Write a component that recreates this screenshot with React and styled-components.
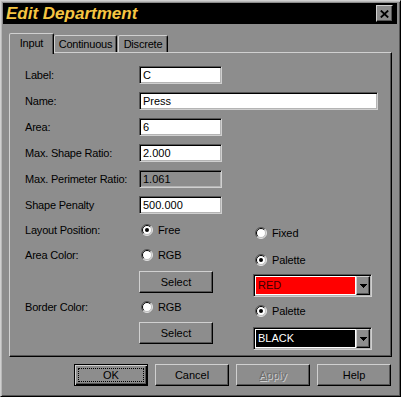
import React from "react";
import styled, { createGlobalStyle, css } from "styled-components";

const BG = "#8d8d8d";
const LIGHT = "#d0d0d0";
const SHADOW = "#555555";

const GlobalStyle = createGlobalStyle`
  html, body { margin: 0; padding: 0; background: ${BG}; }
  body {
    font-family: "Liberation Sans", Arial, sans-serif;
    font-size: 11px;
    color: #000;
  }
  #root { width: 401px; height: 397px; }
`;

const raised = css`
  border: 1px solid;
  border-color: ${LIGHT} #000 #000 ${LIGHT};
  box-shadow: inset -1px -1px 0 ${SHADOW};
`;

const sunken = css`
  border: 1px solid;
  border-color: ${SHADOW} ${LIGHT} ${LIGHT} ${SHADOW};
  box-shadow: inset 1px 1px 0 #000, inset -1px -1px 0 #b4b4b4;
`;

const Window = styled.div`
  box-sizing: border-box;
  width: 401px;
  height: 397px;
  background: ${BG};
  border: 1px solid;
  border-color: ${LIGHT} #000 #000 ${LIGHT};
  box-shadow: inset 1px 1px 0 #b8b8b8, inset -1px -1px 0 ${SHADOW};
  padding: 2px 3px 3px 2px;
  display: flex;
  flex-direction: column;
`;

const TitleBar = styled.div`
  height: 21px;
  flex: none;
  background: #000;
  display: flex;
  align-items: center;
  justify-content: space-between;
  padding: 0 4px 0 3px;
`;

const Title = styled.span`
  font-family: "Liberation Sans", Arial, sans-serif;
  font-weight: bold;
  font-style: italic;
  font-size: 17px;
  color: #f5c542;
  line-height: 21px;
`;

const CloseButton = styled.div`
  ${raised};
  box-sizing: border-box;
  width: 17px;
  height: 17px;
  background: ${BG};
  display: flex;
  align-items: center;
  justify-content: center;
`;

const Body = styled.div`
  padding: 9px 5px 0 6px;
  display: flex;
  flex-direction: column;
`;

const TabRow = styled.div`
  height: 19px;
  display: flex;
  align-items: flex-end;
`;

const Tab = styled.div`
  position: relative;
  box-sizing: border-box;
  width: ${(p) => p.$w}px;
  height: ${(p) => (p.$active ? 21 : 17)}px;
  margin-bottom: ${(p) => (p.$active ? -2 : 0)}px;
  margin-right: ${(p) => (p.$active ? 0 : 1)}px;
  z-index: ${(p) => (p.$active ? 2 : 0)};
  background: ${BG};
  border: 1px solid;
  border-bottom: none;
  border-color: ${LIGHT} #000 transparent ${LIGHT};
  border-radius: 2px 2px 0 0;
  box-shadow: inset -1px 0 0 ${SHADOW};
  display: flex;
  align-items: center;
  justify-content: center;
  padding-bottom: ${(p) => (p.$active ? 2 : 0)}px;
  letter-spacing: -0.2px;
`;

const Panel = styled.div`
  box-sizing: border-box;
  height: 305px;
  border: 1px solid;
  border-color: ${LIGHT} #000 #000 ${LIGHT};
  box-shadow: inset -1px -1px 0 ${SHADOW};
  padding: 13px 12px 0 15px;
`;

const FieldList = styled.div`
  display: flex;
  flex-direction: column;
  gap: 8px;
`;

const FieldRow = styled.div`
  display: grid;
  grid-template-columns: 114px auto;
  align-items: center;
  height: 18px;
`;

const Label = styled.span`
  font-size: 11px;
  letter-spacing: -0.2px;
  line-height: 18px;
  align-self: start;
  white-space: nowrap;
`;

const TextBox = styled.div`
  ${sunken};
  box-sizing: border-box;
  width: ${(p) => p.$w}px;
  height: 18px;
  background: ${(p) => (p.$disabled ? BG : "#fff")};
  padding: 0 3px;
  font-size: 11px;
  line-height: 17px;
  white-space: nowrap;
`;

const ChoiceGrid = styled.div`
  margin-top: 7px;
  display: grid;
  grid-template-columns: 114px 114px 1fr;
  grid-template-rows: 25px 25px 27px 24px 22px;
`;

const RightColumn = styled.div`
  grid-column: 3;
  grid-row: 1 / span 5;
  align-self: start;
  display: flex;
  flex-direction: column;
  align-items: flex-start;
  padding-top: 3px;
  & > * {
    flex: none;
  }
`;

const RadioRow = styled.div`
  display: flex;
  align-items: center;
  gap: 5px;
  height: 18px;
  padding-left: 2px;
  margin-top: ${(p) => p.$mt || 0}px;
  align-self: start;
  letter-spacing: -0.1px;
`;

const PushButton = styled.div`
  ${raised};
  box-sizing: border-box;
  width: 74px;
  height: 22px;
  background: ${BG};
  display: flex;
  align-items: center;
  justify-content: center;
  font-size: 11px;
  color: ${(p) => (p.$disabled ? "#6c6c6c" : "#000")};
  text-shadow: ${(p) => (p.$disabled ? `1px 1px 0 ${LIGHT}` : "none")};
`;

const SelectButton = styled(PushButton)`
  grid-column: 2;
  align-self: start;
`;

const DefaultButton = styled(PushButton)`
  border: 1px solid #000;
  box-shadow: inset 1px 1px 0 ${LIGHT}, inset -1px -1px 0 #000,
    inset -2px -2px 0 ${SHADOW};
  padding: 3px;
`;

const FocusRing = styled.span`
  flex: 1;
  align-self: stretch;
  border: 1px dotted #000;
  display: flex;
  align-items: center;
  justify-content: center;
`;

const ComboFrame = styled.div`
  ${sunken};
  box-sizing: border-box;
  width: 119px;
  height: 23px;
  padding: 1px;
  display: flex;
  margin-top: ${(p) => p.$mt || 0}px;
`;

const ComboField = styled.div`
  flex: 1;
  background: ${(p) => p.$bg};
  color: ${(p) => p.$fg};
  border: 1px solid #fff;
  padding-left: 2px;
  font-size: 11px;
  line-height: 17px;
`;

const DropButton = styled.div`
  ${raised};
  box-sizing: border-box;
  width: 14px;
  background: ${BG};
  display: flex;
  align-items: center;
  justify-content: center;
`;

const ButtonRow = styled.div`
  margin-top: 7px;
  display: flex;
  justify-content: flex-end;
  gap: 7px;
  padding-right: 1px;
`;

function Radio({ checked }) {
  return (
    <svg width="12" height="12" viewBox="0 0 12 12" style={{ flex: "none" }}>
      <circle cx="6" cy="6" r="5" fill="#fff" />
      <path d="M2.1 9.9 A5.5 5.5 0 0 1 9.9 2.1" fill="none" stroke={SHADOW} strokeWidth="1" />
      <path d="M9.9 2.1 A5.5 5.5 0 0 1 2.1 9.9" fill="none" stroke="#e4e4e4" strokeWidth="1" />
      <path d="M2.8 9.2 A4.5 4.5 0 0 1 9.2 2.8" fill="none" stroke="#000" strokeWidth="1" />
      <path d="M9.2 2.8 A4.5 4.5 0 0 1 2.8 9.2" fill="none" stroke="#bdbdbd" strokeWidth="1" />
      {checked && <circle cx="6" cy="6" r="2" fill="#000" />}
    </svg>
  );
}

function Arrow() {
  return (
    <svg width="7" height="4" viewBox="0 0 7 4" shapeRendering="crispEdges">
      <rect x="0" y="0" width="7" height="1" fill="#000" />
      <rect x="1" y="1" width="5" height="1" fill="#000" />
      <rect x="2" y="2" width="3" height="1" fill="#000" />
      <rect x="3" y="3" width="1" height="1" fill="#000" />
    </svg>
  );
}

function Combo({ bg, fg, text, mt }) {
  return (
    <ComboFrame $mt={mt}>
      <ComboField $bg={bg} $fg={fg}>{text}</ComboField>
      <DropButton>
        <Arrow />
      </DropButton>
    </ComboFrame>
  );
}

const fields = [
  { label: "Label:", value: "C", w: 83 },
  { label: "Name:", value: "Press", w: 239 },
  { label: "Area:", value: "6", w: 83 },
  { label: "Max. Shape Ratio:", value: "2.000", w: 83 },
  { label: "Max. Perimeter Ratio:", value: "1.061", w: 83, disabled: true },
  { label: "Shape Penalty", value: "500.000", w: 83 },
];

export default function App() {
  return (
    <>
      <GlobalStyle />
      <Window>
        <TitleBar>
          <Title>Edit Department</Title>
          <CloseButton>
            <svg width="9" height="8" viewBox="0 0 9 8">
              <path d="M0.8 0.5 L8.2 7.5 M8.2 0.5 L0.8 7.5" stroke="#000" strokeWidth="1.8" />
            </svg>
          </CloseButton>
        </TitleBar>
        <Body>
          <TabRow>
            <Tab $active $w={45}>Input</Tab>
            <Tab $w={63}>Continuous</Tab>
            <Tab $w={50}>Discrete</Tab>
          </TabRow>
          <Panel>
            <FieldList>
              {fields.map((f) => (
                <FieldRow key={f.label}>
                  <Label>{f.label}</Label>
                  <TextBox $w={f.w} $disabled={f.disabled}>{f.value}</TextBox>
                </FieldRow>
              ))}
            </FieldList>
            <ChoiceGrid>
              <RightColumn>
                <RadioRow>
                  <Radio />
                  <span>Fixed</span>
                </RadioRow>
                <RadioRow $mt={9}>
                  <Radio checked />
                  <span>Palette</span>
                </RadioRow>
                <Combo bg="#ff0000" fg="#3a0000" text="RED" mt={5} />
                <RadioRow $mt={5}>
                  <Radio checked />
                  <span>Palette</span>
                </RadioRow>
                <Combo bg="#000000" fg="#ffffff" text="BLACK" mt={7} />
              </RightColumn>
              <Label>Layout Position:</Label>
              <RadioRow>
                <Radio checked />
                <span>Free</span>
              </RadioRow>
              <Label>Area Color:</Label>
              <RadioRow>
                <Radio />
                <span>RGB</span>
              </RadioRow>
              <SelectButton>Select</SelectButton>
              <Label>Border Color:</Label>
              <RadioRow>
                <Radio />
                <span>RGB</span>
              </RadioRow>
              <SelectButton>Select</SelectButton>
            </ChoiceGrid>
          </Panel>
          <ButtonRow>
            <DefaultButton>
              <FocusRing>OK</FocusRing>
            </DefaultButton>
            <PushButton>Cancel</PushButton>
            <PushButton $disabled>
              <span><u>A</u>pply</span>
            </PushButton>
            <PushButton>Help</PushButton>
          </ButtonRow>
        </Body>
      </Window>
    </>
  );
}
